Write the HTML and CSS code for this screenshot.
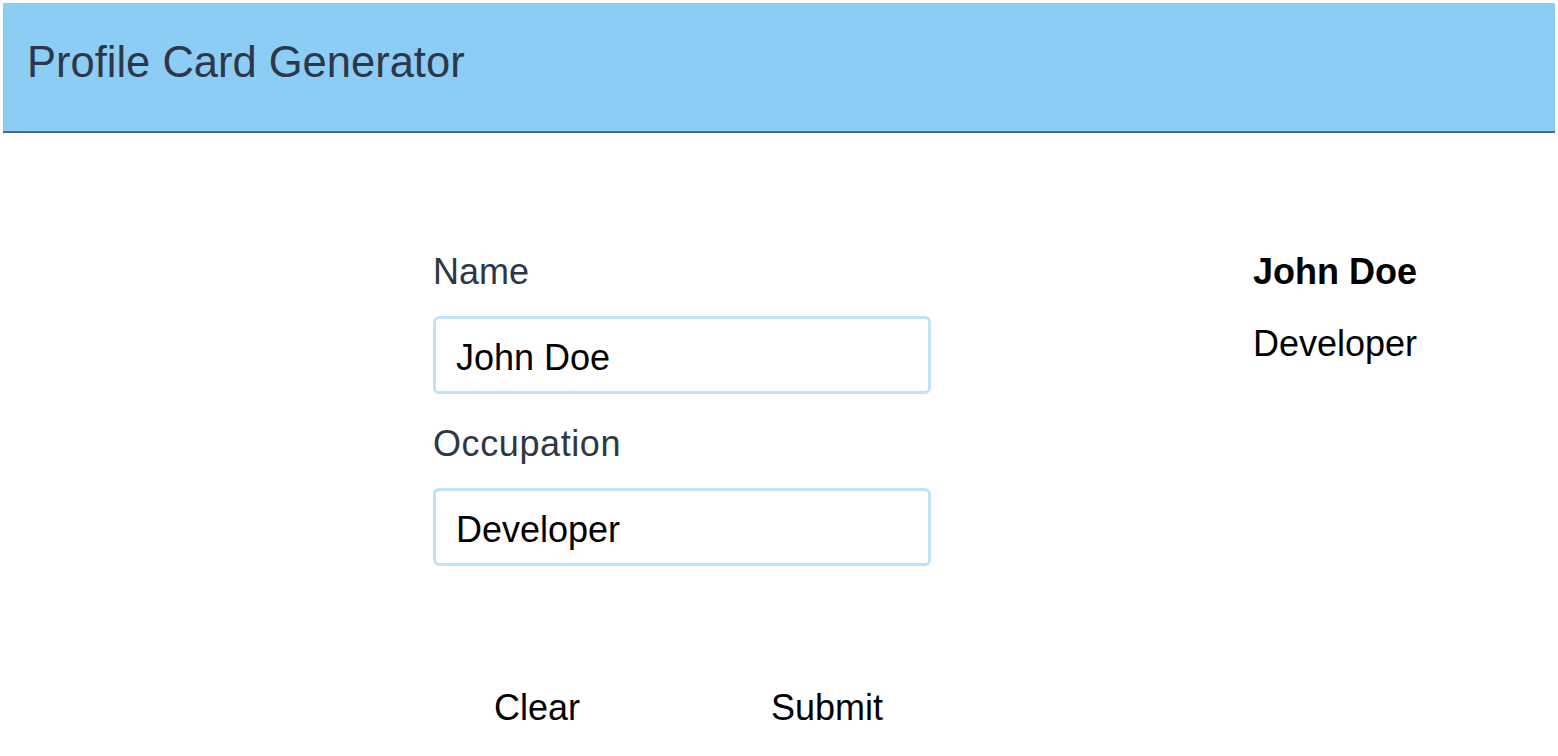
FILE: index.html
```html
<!DOCTYPE html>
<html lang="en">
<head>
<meta charset="utf-8">
<title>Profile Card Generator</title>
<link rel="stylesheet" href="styles.css">
</head>
<body>
<div class="page">
  <header class="header">
    <h1 class="title">Profile Card Generator</h1>
  </header>
  <main class="main">
    <form class="form">
      <label class="label" for="name">Name</label>
      <input class="input" id="name" type="text" value="John Doe">
      <label class="label label-second" for="occupation">Occupation</label>
      <input class="input" id="occupation" type="text" value="Developer">
      <div class="actions">
        <button type="button" class="btn">Clear</button>
        <button type="submit" class="btn">Submit</button>
      </div>
    </form>
    <section class="preview">
      <div class="preview-name">John Doe</div>
      <div class="preview-job">Developer</div>
    </section>
  </main>
</div>
</body>
</html>
```
FILE: styles.css
```css
* { box-sizing: border-box; }
html, body { margin: 0; padding: 0; background: #ffffff; }
body { font-family: "Liberation Sans", Arial, sans-serif; color: #000; }
.page { padding: 3px; }
.header {
  background: #8ccdf6;
  height: 130px;
  border-bottom: 2px solid #566782;
  padding: 34px 24px 0;
}
.title {
  margin: 0;
  font-size: 43.5px;
  line-height: 50px;
  font-weight: 400;
  color: #2d3748;
}
.main {
  display: flex;
  padding: 118px 0 0 430px;
}
.form {
  width: 498px;
  display: flex;
  flex-direction: column;
}
.label {
  font-size: 36px;
  line-height: 42px;
  color: #2d3748;
  margin-bottom: 23px;
}
.label-second { margin-top: 29px; letter-spacing: 0.6px; }
.input {
  height: 78px;
  border: 3px solid #bee3f8;
  border-radius: 6px;
  padding: 5px 20px 0;
  font-family: "Liberation Sans", Arial, sans-serif;
  font-size: 36px;
  color: #000;
  background: #fff;
  outline: none;
}
.actions {
  display: flex;
  gap: 191px;
  padding-left: 61px;
  margin-top: 121px;
}
.btn {
  background: none;
  border: none;
  padding: 0;
  font-family: "Liberation Sans", Arial, sans-serif;
  font-size: 36px;
  line-height: 42px;
  color: #000;
  cursor: pointer;
}
.preview {
  margin-left: 322px;
  display: flex;
  flex-direction: column;
  gap: 30px;
}
.preview-name {
  font-size: 36px;
  line-height: 42px;
  font-weight: 700;
}
.preview-job {
  font-size: 36px;
  line-height: 42px;
}
```
